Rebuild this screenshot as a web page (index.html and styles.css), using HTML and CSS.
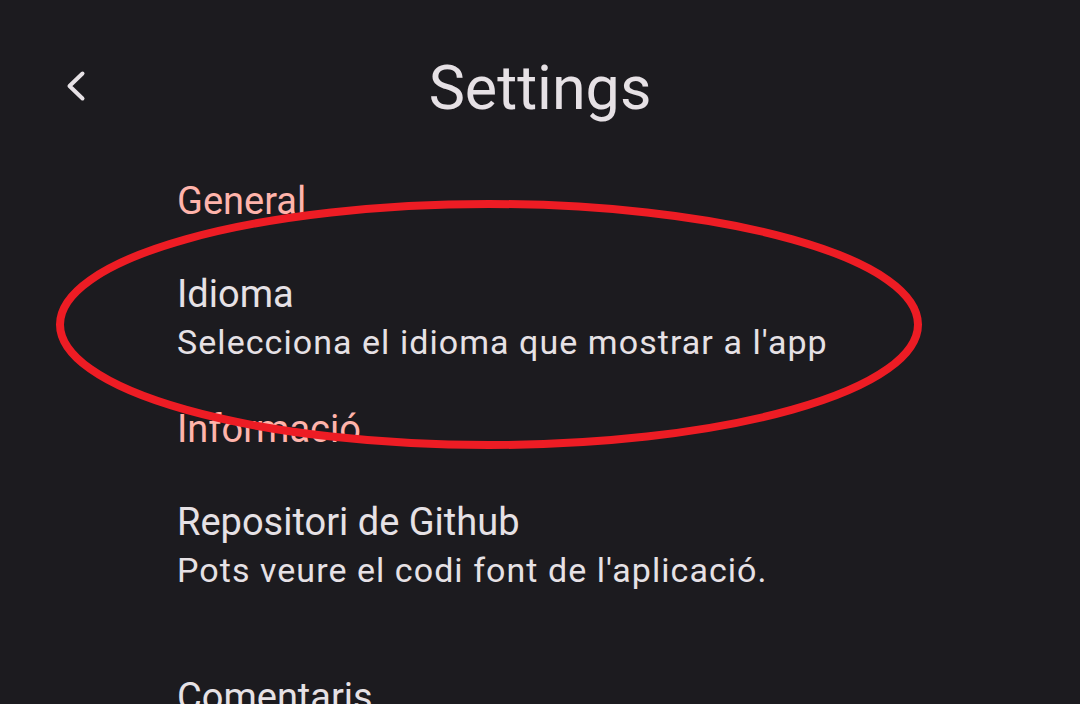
FILE: index.html
```html
<!DOCTYPE html>
<html lang="ca">
<head>
<meta charset="utf-8">
<title>Settings</title>
<link rel="stylesheet" href="styles.css">
</head>
<body>
<div class="page">
  <header class="topbar">
    <button class="back" aria-label="Back">
      <svg width="40" height="40" viewBox="0 0 40 40"><path d="M26.5 7.5 L13.5 20 L26.5 32.5" fill="none" stroke="#E6E1E5" stroke-width="4" stroke-linecap="round" stroke-linejoin="round"/></svg>
    </button>
    <h1 class="title">Settings</h1>
    <div></div>
  </header>
  <main class="list">
    <section class="group">
      <h2 class="category">General</h2>
      <div class="item">
        <div class="item-title">Idioma</div>
        <div class="item-sub">Selecciona el idioma que mostrar a l'app</div>
      </div>
    </section>
    <section class="group">
      <h2 class="category">Informació</h2>
      <div class="item">
        <div class="item-title">Repositori de Github</div>
        <div class="item-sub">Pots veure el codi font de l'aplicació.</div>
      </div>
      <div class="item">
        <div class="item-title">Comentaris</div>
        <div class="item-sub">Envia'ns els teus comentaris.</div>
      </div>
    </section>
  </main>
  <svg class="annotation" width="1080" height="704" viewBox="0 0 1080 704"><ellipse cx="489" cy="324.5" rx="429" ry="120.5" fill="none" stroke="#ED1C24" stroke-width="8"/></svg>
</div>
</body>
</html>
```

FILE: styles.css
```css
html, body {
  margin: 0;
  padding: 0;
  background: #1C1B1F;
  width: 1080px;
  height: 704px;
  overflow: hidden;
}
.page {
  position: relative;
  width: 1080px;
  height: 704px;
  overflow: hidden;
  font-family: Roboto, "Noto Sans", sans-serif;
  color: #E6E1E5;
}
.topbar {
  display: grid;
  grid-template-columns: 1fr auto 1fr;
  padding-top: 52px;
  height: 72px;
}
.back {
  justify-self: start;
  align-self: start;
  margin: 14px 0 0 56px;
  padding: 0;
  border: 0;
  background: none;
  width: 40px;
  height: 40px;
  display: block;
}
.back svg { display: block; }
.title {
  margin: 0;
  font-size: 61px;
  line-height: 72px;
  font-weight: 400;
  color: #E6E1E5;
}
.list {
  padding-left: 177px;
}
.group { margin: 0; }
.group:first-child { padding-top: 55px; }
.category {
  margin: 0;
  padding-bottom: 9px;
  font-size: 38px;
  line-height: 44px;
  font-weight: 400;
  color: #FFB4AB;
}
.item {
  padding: 40px 0 45px;
}
.item-title {
  font-size: 38px;
  line-height: 44px;
  color: #E6E1E5;
}
.item-sub {
  margin-top: 6px;
  font-size: 34px;
  line-height: 40px;
  letter-spacing: 1.05px;
  color: #E6E1E5;
}
.annotation {
  position: absolute;
  left: 0;
  top: 0;
  pointer-events: none;
}
```
